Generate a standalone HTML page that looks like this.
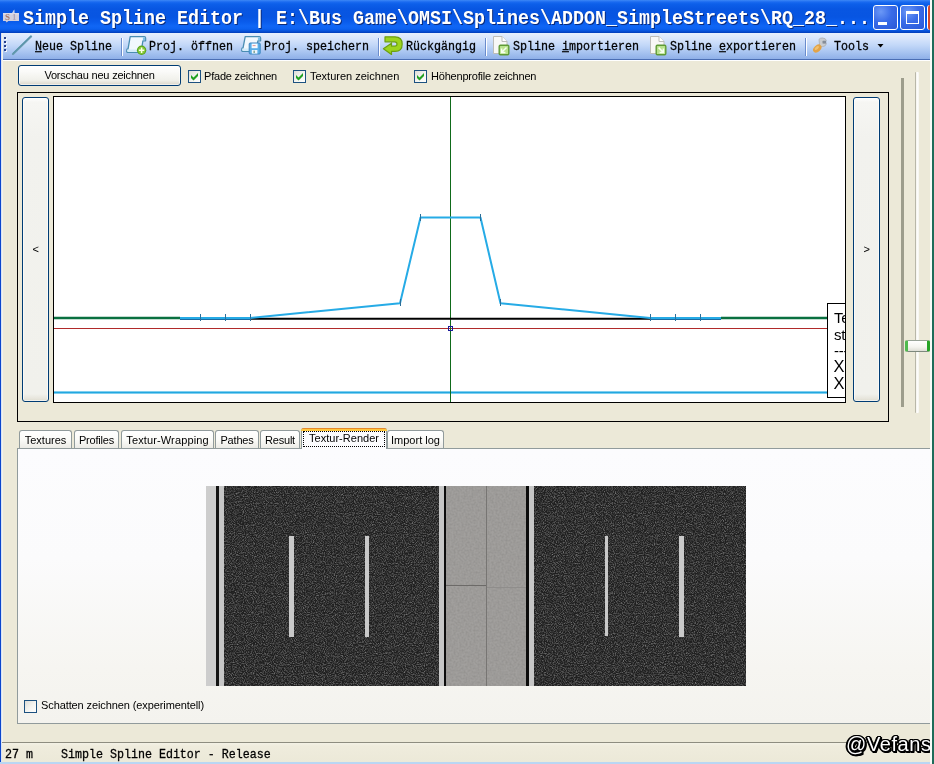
<!DOCTYPE html>
<html lang="de">
<head>
<meta charset="utf-8">
<title>Simple Spline Editor</title>
<style>
html,body{margin:0;padding:0;}
body{width:934px;height:764px;overflow:hidden;background:#ece9d8;position:relative;
  font-family:"Liberation Sans",sans-serif;font-size:11px;color:#000;letter-spacing:-0.2px;}
.abs{position:absolute;}
.mono,.lbl,.tab,.xpbtn{will-change:transform;}
.mono{font-family:"Liberation Mono",monospace;white-space:pre;letter-spacing:0;}
/* ---------- title bar ---------- */
#title{left:0;top:0;width:930px;height:33px;
  background:linear-gradient(to bottom,#3d88f6 0px,#1a6af0 2px,#0d5fe9 4px,#0856e2 9px,#0755e2 17px,#0a5cec 22px,#1066f5 26px,#0c62f1 29px,#0652da 31px,#003cb8 33px);}
#ttext{left:23px;top:9px;height:22px;line-height:22px;font-size:18.34px;font-weight:bold;color:#fff;
  text-shadow:1px 1px 0 #0a2a7a;letter-spacing:0;transform:scaleY(1.08);transform-origin:0 14px;}
.cbtn{top:5px;width:23px;height:23px;border:1px solid #fff;border-radius:3px;
  background:radial-gradient(circle at 30% 25%,#6b98f6 0%,#3a6ce8 45%,#2958d6 100%);}
/* ---------- toolbar ---------- */
#tb{left:2px;top:33px;width:928px;height:26px;
  background:linear-gradient(to bottom,#e6effd 0px,#d6e4fb 6px,#c3d8f8 12px,#a9c5f1 19px,#8fb0e8 26px);}
#tbline{left:2px;top:59px;width:928px;height:1px;background:#4a6eb4;}
#tbline2{left:2px;top:60px;width:928px;height:1px;background:#ffffff;}
.tbt{top:39px;height:16px;line-height:16px;font-size:11.67px;color:#000;-webkit-text-stroke:0.25px #000;transform:scaleY(1.15);transform-origin:0 11px;}
.sep{top:38px;width:1px;height:18px;background:#6a8ccc;}
.sep:after{content:"";position:absolute;left:1px;top:0;width:1px;height:18px;background:#fff;}
u{text-decoration:underline;text-underline-offset:1px;}
/* ---------- window edges ---------- */
#lb{left:0;top:33px;width:1px;height:731px;background:#0b46cc;box-shadow:1px 0 0 #d9e3f4,2px 0 0 #f3f2ea;}
#rb1{left:930px;top:0;width:2px;height:764px;background:#f8faf8;}
#rb2{left:932px;top:0;width:2px;height:764px;background:#1f6b5a;}
#bb{left:0;top:762px;width:930px;height:2px;background:#b9d6f3;}
</style>
</head>
<body>
<!-- title bar -->
<div id="title" class="abs"></div>
<div id="ttext" class="abs mono">Simple Spline Editor | E:\Bus Game\OMSI\Splines\ADDON_SimpleStreets\RQ_28_...</div>
<svg class="abs" style="left:2px;top:9px;will-change:transform" width="18" height="15" viewBox="0 0 18 15">
  <rect x="1" y="4" width="16" height="8" fill="#d2d0de"/>
  <rect x="1" y="4" width="16" height="1.5" fill="#dddbe8"/>
  <path d="M10 4 L11.5 1.6 L12.4 0.6 L12.6 4Z" fill="#c9d4ee"/>
  <text x="3" y="11.3" font-family="Liberation Serif,serif" font-size="9" font-weight="bold" fill="#a8786a">S</text>
  <text x="10" y="11.3" font-family="Liberation Serif,serif" font-size="9" font-weight="bold" fill="#b0a6b8">1</text>
  <path d="M3.6 12 L4.6 13.4 L6.4 12Z" fill="#c9c4cc"/>
</svg>
<div class="abs cbtn" style="left:873px"><div class="abs" style="left:4px;top:16px;width:9px;height:3px;background:#fff"></div></div>
<div class="abs cbtn" style="left:900px"><div class="abs" style="left:5px;top:5px;width:11px;height:9px;border:1px solid #fff;border-top-width:3px"></div></div>
<div class="abs" style="left:927px;top:5px;width:3px;height:25px;background:#d8482a;border-left:1px solid #fff;border-radius:4px 0 0 4px;box-sizing:border-box"></div>

<!-- toolbar -->
<div id="tb" class="abs"></div>
<div id="tbline" class="abs"></div>
<div id="tbline2" class="abs"></div>
<div id="lb" class="abs"></div>
<div id="rb1" class="abs"></div>
<div id="rb2" class="abs"></div>

<!-- toolbar items -->
<svg class="abs" style="left:4px;top:37px" width="4" height="15" viewBox="0 0 4 15">
  <g fill="#27408b"><rect x="0" y="0" width="2" height="2"/><rect x="0" y="4" width="2" height="2"/><rect x="0" y="8" width="2" height="2"/><rect x="0" y="12" width="2" height="2"/></g>
  <g fill="#ffffff"><rect x="1" y="1" width="2" height="2" opacity=".8"/><rect x="1" y="5" width="2" height="2" opacity=".8"/><rect x="1" y="9" width="2" height="2" opacity=".8"/><rect x="1" y="13" width="2" height="2" opacity=".8"/></g>
  <g fill="#27408b"><rect x="0" y="0" width="2" height="2"/><rect x="0" y="4" width="2" height="2"/><rect x="0" y="8" width="2" height="2"/><rect x="0" y="12" width="2" height="2"/></g>
</svg>
<!-- new spline icon: diagonal line -->
<svg class="abs" style="left:11px;top:35px" width="22" height="21" viewBox="0 0 22 21">
  <line x1="2" y1="19" x2="20" y2="1.5" stroke="#6a9cb0" stroke-width="2.2" stroke-linecap="round"/>
  <line x1="2" y1="18.4" x2="19.6" y2="1.2" stroke="#4d8ea6" stroke-width="0.9" stroke-linecap="round"/>
</svg>
<div class="abs mono tbt" style="left:35px"><u>N</u>eue Spline</div>
<div class="abs sep" style="left:121px"></div>
<!-- open icon: script + green plus -->
<svg class="abs" style="left:126px;top:35px" width="21" height="21" viewBox="0 0 21 21">
  <path d="M4.2 1.6 H18.3 Q19.6 1.6 19.6 3 V5.8 H16.9 L15 17.4 H2 Q0.5 17.4 0.7 16 L1 14.2 H2 Z" fill="#f1f8fd" stroke="#4a8db2" stroke-width="1.3" stroke-linejoin="round"/>
  
  <rect x="16.9" y="2.4" width="2.2" height="2.8" fill="#7fc0e6"/>
  <path d="M1.3 14.6 H12.5 L12 16.9 H2 Q1 16.9 1.3 14.6Z" fill="#d4ecfa"/>
  <circle cx="15.6" cy="15.3" r="4.7" fill="#5aa51c"/>
  <circle cx="15.6" cy="15.3" r="3.6" fill="#86c83a"/>
  <path d="M15.6 12.6 V18 M12.9 15.3 H18.3" stroke="#fdffe8" stroke-width="1.5"/>
</svg>
<div class="abs mono tbt" style="left:149px">Proj. öffnen</div>
<!-- save icon: script + disk -->
<svg class="abs" style="left:241px;top:35px" width="21" height="21" viewBox="0 0 21 21">
  <path d="M4.2 1.6 H18.3 Q19.6 1.6 19.6 3 V5.8 H16.9 L15 16.4 H2 Q0.5 16.4 0.7 15 L1 13.2 H2 Z" fill="#f1f8fd" stroke="#4a8db2" stroke-width="1.3" stroke-linejoin="round"/>
  <rect x="16.9" y="2.4" width="2.2" height="2.8" fill="#7fc0e6"/>
  <path d="M1.3 13.6 H8 V15.9 H2 Q1 15.9 1.3 13.6Z" fill="#d4ecfa"/>
  <rect x="8.2" y="8" width="11" height="11" rx="1" fill="#5aaee8" stroke="#3f87c0" stroke-width="1"/>
  <rect x="10.6" y="8.6" width="6" height="4.6" fill="#f6fbff"/>
  <rect x="11.6" y="10.2" width="3" height="0.9" fill="#d88"/>
  <rect x="10.8" y="15" width="5.6" height="3.6" fill="#eef6fd"/>
  <rect x="12.4" y="15.6" width="1.6" height="2.4" fill="#8a9"/>
</svg>
<div class="abs mono tbt" style="left:264px">Proj. speichern</div>
<div class="abs sep" style="left:378px"></div>
<!-- undo icon -->
<svg class="abs" style="left:382px;top:35px" width="22" height="21" viewBox="0 0 22 21">
  <path d="M3 1.8 H13 Q20.2 1.8 20.2 9 Q20.2 16.4 13 16.4 H9.5 V19.4 L1.4 13.8 L9.5 8.2 V11.2 H12.8 Q15 11.2 15 9 Q15 6.8 12.8 6.8 H3 Z" fill="#9cd41e" stroke="#6c9f12" stroke-width="1.2" stroke-linejoin="round"/>
</svg>
<div class="abs mono tbt" style="left:406px">Rückgängig</div>
<div class="abs sep" style="left:485px"></div>
<!-- import icon -->
<svg class="abs" style="left:492px;top:35px" width="18" height="21" viewBox="0 0 18 21">
  <path d="M1.5 1.5 H10 L15 6.5 V18.5 H1.5 Z" fill="#f8f8f6" stroke="#bdbdb8" stroke-width="1"/>
  <path d="M10 1.5 V6.5 H15" fill="#fff" stroke="#bdbdb8" stroke-width="1"/>
  <rect x="7.2" y="10.2" width="9.6" height="9.6" rx="1.2" fill="#b9e38c" stroke="#5f9a36" stroke-width="1.4"/>
  <path d="M14.5 12.5 L10 17 M9.6 13.6 V17.4 H13.4" fill="none" stroke="#f8fff0" stroke-width="1.5"/>
</svg>
<div class="abs mono tbt" style="left:512.5px">Spline <u>i</u>mportieren</div>
<!-- export icon -->
<svg class="abs" style="left:649px;top:35px" width="18" height="21" viewBox="0 0 18 21">
  <path d="M1.5 1.5 H10 L15 6.5 V18.5 H1.5 Z" fill="#f8f8f6" stroke="#bdbdb8" stroke-width="1"/>
  <path d="M10 1.5 V6.5 H15" fill="#fff" stroke="#bdbdb8" stroke-width="1"/>
  <rect x="7.2" y="10.2" width="9.6" height="9.6" rx="1.2" fill="#b9e38c" stroke="#5f9a36" stroke-width="1.4"/>
  <path d="M9.6 12.6 L14.2 17.2 M14.4 13.4 V17.4 H10.6" fill="none" stroke="#f8fff0" stroke-width="1.5"/>
</svg>
<div class="abs mono tbt" style="left:669.5px">Spline <u>e</u>xportieren</div>
<div class="abs sep" style="left:805px"></div>
<!-- tools icon -->
<svg class="abs" style="left:812px;top:36px" width="16" height="19" viewBox="0 0 16 19">
  <path d="M7 3.4 Q8 1.8 10.6 2 Q13.8 2.2 14.4 4.6 L11 4.8 L11 7.4 L14.4 7.6 Q13.8 10.4 10.8 10.6 Q8.6 10.8 7.6 9.4 Z" fill="#c9ccd0" stroke="#aeb2b8" stroke-width="0.9"/>
  <rect x="10.6" y="5" width="3.6" height="2.4" fill="#858d98"/>
  <ellipse cx="5.3" cy="12.6" rx="4.8" ry="3.3" transform="rotate(-42 5.3 12.6)" fill="#e2a347"/>
  <ellipse cx="4.8" cy="12" rx="2.6" ry="1.3" transform="rotate(-42 4.8 12)" fill="#f1c070"/>
</svg>
<div class="abs mono tbt" style="left:834px">Tools</div>
<svg class="abs" style="left:877px;top:44px" width="7" height="4" viewBox="0 0 7 4"><path d="M0.5 0 H6.5 L3.5 3.5Z" fill="#000"/></svg>
<!--TOOLBAR-ITEMS-END-->
<style>
.xpbtn{box-sizing:border-box;border:1px solid #003c74;border-radius:3px;
  background:linear-gradient(to bottom,#ffffff 0%,#fafaf8 30%,#f0f0ea 75%,#e2dfd4 92%,#d2cfc2 100%);
  box-shadow:inset 0 0 0 1px rgba(255,255,255,.6);text-align:center;}
.xptall{background:linear-gradient(to bottom,#ffffff 0px,#f6f6f3 4px,#f2f2ee 40px,#f1f1ec 296px,#e6e4da 301px,#d6d3c6 304px);}
.cb{box-sizing:border-box;width:13px;height:13px;border:1px solid #1c5180;
  background:linear-gradient(135deg,#dcdcd7 0%,#f3f3ef 50%,#ffffff 100%);}
.lbl{height:13px;line-height:13px;font-size:11px;white-space:pre;}
</style>
<div class="abs xpbtn" style="left:18px;top:65px;width:163px;height:21px;line-height:19px;font-size:11px"><span id="vtxt">Vorschau neu zeichnen</span></div>
<!-- checkboxes -->
<div class="abs cb" style="left:188px;top:70px"></div>
<svg class="abs" style="left:190px;top:72px" width="9" height="9" viewBox="0 0 9 9"><path d="M1 3 L3.5 5.5 L8 1 V4 L3.5 8.5 L1 6Z" fill="#21a121"/></svg>
<div class="abs lbl" style="left:204px;top:70px">Pfade zeichnen</div>
<div class="abs cb" style="left:293px;top:70px"></div>
<svg class="abs" style="left:295px;top:72px" width="9" height="9" viewBox="0 0 9 9"><path d="M1 3 L3.5 5.5 L8 1 V4 L3.5 8.5 L1 6Z" fill="#21a121"/></svg>
<div class="abs lbl" style="left:310px;top:70px;letter-spacing:0">Texturen zeichnen</div>
<div class="abs cb" style="left:414px;top:70px"></div>
<svg class="abs" style="left:416px;top:72px" width="9" height="9" viewBox="0 0 9 9"><path d="M1 3 L3.5 5.5 L8 1 V4 L3.5 8.5 L1 6Z" fill="#21a121"/></svg>
<div class="abs lbl" style="left:431px;top:70px">Höhenprofile zeichnen</div>
<!--CONTROLS-END-->
<!-- preview panel -->
<div class="abs" style="left:17px;top:92px;width:872px;height:330px;box-sizing:border-box;border:1px solid #000;"></div>
<div class="abs xpbtn xptall" style="left:22px;top:97px;width:27px;height:305px;line-height:302px;font-size:11px">&lt;</div>
<div class="abs xpbtn xptall" style="left:853px;top:97px;width:27px;height:305px;line-height:302px;font-size:11px">&gt;</div>
<div class="abs" style="left:53px;top:96px;width:793px;height:307px;box-sizing:border-box;border:1px solid #000;background:#fff;overflow:hidden">
<svg class="abs" style="left:0;top:0;will-change:transform" width="791" height="305" viewBox="54 97 791 305">
  <!-- bottom cyan line -->
  <line x1="54" y1="392.5" x2="845" y2="392.5" stroke="#9fdcf5" stroke-width="3"/>
  <line x1="54" y1="392.5" x2="845" y2="392.5" stroke="#22a7e0" stroke-width="1.6"/>
  <!-- red line -->
  <line x1="54" y1="328.5" x2="845" y2="328.5" stroke="#b02a2a" stroke-width="1"/>
  <!-- vertical green -->
  <line x1="450.5" y1="97" x2="450.5" y2="402" stroke="#0f6a1a" stroke-width="1"/>
  <!-- black ground line -->
  <line x1="250" y1="318.7" x2="650" y2="318.7" stroke="#000" stroke-width="2"/>
  <line x1="180" y1="319.3" x2="250" y2="319.3" stroke="#1c6aa0" stroke-width="1.4"/>
  <line x1="650" y1="319.3" x2="721" y2="319.3" stroke="#1c6aa0" stroke-width="1.4"/>
  <!-- green ends -->
  <line x1="54" y1="318" x2="180" y2="318" stroke="#0a7040" stroke-width="2.6"/>
  <line x1="721" y1="318" x2="845" y2="318" stroke="#0a7040" stroke-width="2.6"/>
  <!-- cyan profile -->
  <polyline points="180,317.9 250,317.9 400,303.2 420.5,217.5 480.5,217.5 500.5,303.2 650,317.9 721,317.9" fill="none" stroke="#26abe6" stroke-width="2" stroke-linejoin="round"/>
  <!-- ticks -->
  <g stroke="#2a6f9a" stroke-width="1">
    <line x1="200.5" y1="314" x2="200.5" y2="321"/><line x1="225.5" y1="314" x2="225.5" y2="321"/><line x1="250.5" y1="314" x2="250.5" y2="321"/>
    <line x1="650.5" y1="314" x2="650.5" y2="321"/><line x1="675.5" y1="314" x2="675.5" y2="321"/><line x1="700.5" y1="314" x2="700.5" y2="321"/>
    <line x1="400.5" y1="299" x2="400.5" y2="306"/><line x1="500.5" y1="299" x2="500.5" y2="306"/>
    <line x1="420.5" y1="214" x2="420.5" y2="221"/><line x1="480.5" y1="214" x2="480.5" y2="221"/>
  </g>
  <!-- centre marker -->
  <rect x="448.5" y="326.5" width="4" height="4" fill="none" stroke="#1a1a9a" stroke-width="1"/>
  <!-- tooltip box -->
  <rect x="827.5" y="303.5" width="30" height="94" fill="#fff" stroke="#000" stroke-width="1"/>
  <g font-family="Liberation Sans, sans-serif" font-size="15" fill="#000">
    <text x="834" y="323">Te</text>
    <text x="834" y="340">st</text>
    <text x="834" y="356">---</text>
    <text x="833.5" y="372.3" font-size="16.5">X</text>
    <text x="833.5" y="389.3" font-size="16.5">X</text>
  </g>
</svg>
</div>
<!-- trackbar -->
<div class="abs" style="left:901px;top:78px;width:3px;height:329px;background:#9d9d8c"></div>
<div class="abs" style="left:915px;top:72px;width:4px;height:341px;background:linear-gradient(to right,#b9b7a8 0,#b9b7a8 1px,#f4f3ec 1px,#ffffff 3px,#f0efe6 4px);border-radius:1px"></div>
<div class="abs" style="left:905px;top:340px;width:25px;height:12px;box-sizing:border-box;border:1px solid #98a398;border-bottom-color:#7d887d;border-radius:2px;border-left:3px solid #4fba4f;border-right:3px solid #25a325;background:linear-gradient(to bottom,#ffffff,#f4f4ef 60%,#deded5)"></div>
<!--CANVAS-END-->
<style>
.tab{box-sizing:border-box;top:430px;height:18px;border:1px solid #919b9c;border-bottom:none;border-radius:3px 3px 0 0;
  background:linear-gradient(to bottom,#ffffff 0%,#fbfbf8 50%,#ecebe6 100%);font-size:11px;line-height:18px;text-align:center;white-space:pre;}
</style>
<!-- tab pane -->
<div class="abs" style="left:17px;top:448px;width:913px;height:276px;box-sizing:border-box;border:1px solid #919b9c;border-right:none;
  background:linear-gradient(to bottom,#fcfcfe 0%,#fbfbfc 40%,#f6f5f1 80%,#f4f3ee 100%)"></div>
<div class="abs tab" style="left:19px;width:53px;letter-spacing:0">Textures</div>
<div class="abs tab" style="left:74px;width:45px">Profiles</div>
<div class="abs tab" style="left:121px;width:93px;letter-spacing:0.13px">Textur-Wrapping</div>
<div class="abs tab" style="left:215px;width:44px">Pathes</div>
<div class="abs tab" style="left:260px;width:40px">Result</div>
<div class="abs tab" style="left:387px;width:57px;letter-spacing:0">Import log</div>
<!-- selected tab -->
<div class="abs" style="left:301px;top:428px;width:86px;height:21px;box-sizing:border-box;border:1px solid #919b9c;border-bottom:none;border-radius:3px 3px 0 0;background:#fcfcfe"></div>
<div class="abs" style="left:301px;top:428px;width:86px;height:3px;background:linear-gradient(to bottom,#e68b2c 0,#e68b2c 1px,#ffc73c 1px,#ffc73c 3px);border-radius:3px 3px 0 0"></div>
<div class="abs" style="left:303px;top:431px;width:82px;height:16px;box-sizing:border-box;border:1px dotted #000;font-size:11px;line-height:13px;text-align:center;white-space:pre;letter-spacing:0.03px;will-change:transform">Textur-Render</div>

<!-- texture render -->
<svg class="abs" style="left:206px;top:486px" width="540" height="200" viewBox="206 486 540 200">
  <defs>
    <filter id="asph" x="0" y="0" width="100%" height="100%" color-interpolation-filters="sRGB">
      <feTurbulence type="fractalNoise" baseFrequency="0.9" numOctaves="2" seed="7" result="n"/>
      <feColorMatrix in="n" type="matrix" values="0 0 0 0 0  0 0 0 0 0  0 0 0 0 0  1.7 0 0 0 -0.67" result="a"/>
      <feFlood flood-color="#8a8a8a"/>
      <feComposite in2="a" operator="in" result="speck"/>
      <feMerge><feMergeNode in="SourceGraphic"/><feMergeNode in="speck"/></feMerge>
    </filter>
    <filter id="conc" x="0" y="0" width="100%" height="100%" color-interpolation-filters="sRGB">
      <feTurbulence type="fractalNoise" baseFrequency="0.5" numOctaves="2" seed="3" result="n"/>
      <feColorMatrix in="n" type="matrix" values="0 0 0 0 0  0 0 0 0 0  0 0 0 0 0  0.5 0 0 0 -0.17" result="a"/>
      <feFlood flood-color="#6e6c6a"/>
      <feComposite in2="a" operator="in" result="speck"/>
      <feMerge><feMergeNode in="SourceGraphic"/><feMergeNode in="speck"/></feMerge>
    </filter>
  </defs>
  <rect x="206" y="486" width="540" height="200" fill="#111"/>
  <rect x="206" y="486" width="10" height="200" fill="#cdcdcd"/>
  <rect x="216" y="486" width="3" height="200" fill="#141414"/>
  <rect x="219" y="486" width="5" height="200" fill="#c6c6c6"/>
  <rect x="224" y="486" width="215" height="200" fill="#1f1f1f" filter="url(#asph)"/>
  <rect x="439" y="486" width="5" height="200" fill="#c6c6c6"/>
  <rect x="444" y="486" width="2" height="200" fill="#0c0c0c"/>
  <rect x="446" y="486" width="80" height="200" fill="#a19f9d" filter="url(#conc)"/>
  <rect x="486" y="486" width="1" height="200" fill="#777573"/>
  <rect x="446" y="585" width="40" height="1" fill="#6c6a68"/>
  <rect x="487" y="587" width="39" height="1" fill="#8f8d8b"/>
  <rect x="526" y="486" width="3" height="200" fill="#0c0c0c"/>
  <rect x="529" y="486" width="5" height="200" fill="#c6c6c6"/>
  <rect x="534" y="486" width="212" height="200" fill="#1f1f1f" filter="url(#asph)"/>
  <!-- lane marks -->
  <rect x="289" y="536" width="5" height="101" fill="#c9c9c9"/>
  <rect x="365" y="536" width="4" height="101" fill="#c9c9c9"/>
  <rect x="605" y="536" width="3" height="100" fill="#c9c9c9"/>
  <rect x="679" y="536" width="5" height="101" fill="#c9c9c9"/>
</svg>

<!-- shadow checkbox -->
<div class="abs cb" style="left:24px;top:700px"></div>
<div class="abs lbl" style="left:40.5px;top:699px;letter-spacing:-0.1px">Schatten zeichnen (experimentell)</div>
<!--TABS-END-->
<!-- status bar -->
<div class="abs" style="left:2px;top:742px;width:928px;height:1px;background:#8e8d80"></div>
<div class="abs" style="left:2px;top:743px;width:928px;height:19px;background:linear-gradient(to bottom,#f4f2e6 0,#efecdd 3px,#ece9d8 100%)"></div>
<div class="abs mono" style="left:5px;top:747px;height:16px;line-height:16px;font-size:11.67px;-webkit-text-stroke:0.25px #000;transform:scaleY(1.15);transform-origin:0 11px">27 m    Simple Spline Editor - Release</div>
<div class="abs" style="left:843px;top:728px;width:87px;height:34px;overflow:hidden">
  <div class="abs" style="left:3px;top:3px;font-family:'Liberation Sans',sans-serif;font-size:20px;line-height:26px;font-weight:normal;letter-spacing:0.6px;color:#fff;white-space:pre;will-change:transform;
   text-shadow:-1px -1px 0 #000,1px -1px 0 #000,-1px 1px 0 #000,1px 1px 0 #000,0 -1px 0 #000,0 1px 0 #000,-1px 0 0 #000,1px 0 0 #000,2px 0 0 #000,-2px 0 0 #000,0 2px 0 #000,2px 2px 0 #000,1px 2px 0 #000,2px 1px 0 #000">@Vefans.n</div>
</div>
<!--STATUS-END-->
<div id="bb" class="abs"></div>
</body>
</html>
